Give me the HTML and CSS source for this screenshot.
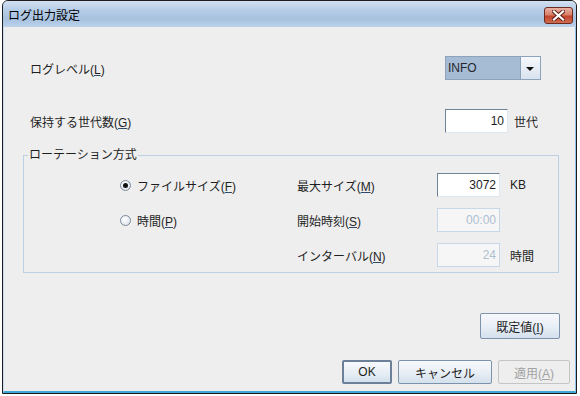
FILE: index.html
```html
<!DOCTYPE html>
<html lang="ja">
<head>
    <meta charset="UTF-8">
    <title>ログ出力設定</title>
    <link rel="stylesheet" href="styles.css">
</head>
<body>
    <div class="window">
        <div class="titlebar">
            <span class="title">ログ出力設定</span>
            <span class="close">
                <svg width="13" height="11" viewBox="0 0 13 11">
                    <path d="M2 1.5 L11 9.5 M11 1.5 L2 9.5" stroke="#5a1c12" stroke-width="4" stroke-linecap="square"/>
                    <path d="M2 1.5 L11 9.5 M11 1.5 L2 9.5" stroke="#ffffff" stroke-width="2.2" stroke-linecap="square"/>
                </svg>
            </span>
        </div>

        <div class="content">
            <div class="row">
                <span class="label">ログレベル(<u>L</u>)</span>
                <div class="combo">
                    <span class="combo-value">INFO</span>
                    <span class="combo-arrow"></span>
                </div>
            </div>

            <div class="row row-gen">
                <span class="label">保持する世代数(<u>G</u>)</span>
                <div class="ctrl">
                    <div class="field">10</div>
                    <span class="suffix">世代</span>
                </div>
            </div>

            <fieldset class="group">
                <legend>ローテーション方式</legend>
                <div class="grid">
                    <label class="radio"><span class="dot checked"></span><span>ファイルサイズ(<u>F</u>)</span></label>
                    <span class="label">最大サイズ(<u>M</u>)</span>
                    <div class="field">3072</div>
                    <span class="unit">KB</span>

                    <label class="radio"><span class="dot"></span><span>時間(<u>P</u>)</span></label>
                    <span class="label">開始時刻(<u>S</u>)</span>
                    <div class="field off">00:00</div>
                    <span class="unit"></span>

                    <span></span>
                    <span class="label">インターバル(<u>N</u>)</span>
                    <div class="field off">24</div>
                    <span class="unit">時間</span>
                </div>
            </fieldset>

            <div class="defaults">
                <button class="btn btn-defaults">既定値(<u>I</u>)</button>
            </div>

            <div class="footer">
                <button class="btn btn-ok">OK</button>
                <button class="btn btn-cancel">キャンセル</button>
                <button class="btn btn-apply" disabled>適用(<u>A</u>)</button>
            </div>
        </div>
    </div>
</body>
</html>
```

FILE: styles.css
```css
body {
    margin: 0;
    background: #ffffff;
    font-family: "Liberation Sans", "Noto Sans CJK JP", sans-serif;
    font-size: 12px;
    color: #1e1e1e;
}

.window {
    box-sizing: border-box;
    width: 575px;
    height: 394px;
    margin-left: 2px;
    border: 1px solid #1c1c1c;
    border-radius: 6px 6px 0 0;
    overflow: hidden;
    display: flex;
    flex-direction: column;
    background: #a9c3e0;
}

.titlebar {
    height: 26px;
    flex: none;
    display: flex;
    align-items: center;
    justify-content: space-between;
    padding: 0 3px 0 5px;
    background: linear-gradient(#d2e0f0 0, #b6cde7 35%, #a7c1df 70%, #bcd2eb 100%);
}

.title {
    font-size: 12px;
    color: #000;
}

.close {
    box-sizing: border-box;
    width: 29px;
    height: 17px;
    margin-top: 2px;
    display: flex;
    align-items: center;
    justify-content: center;
    border: 1px solid #6d2a20;
    border-radius: 3px;
    background: linear-gradient(#e9b2a3 0, #d8806a 45%, #c2452c 55%, #cf6a4f 100%);
}

.content {
    flex: 1;
    border-left: 1px solid #c7dcf1;
    border-right: 1px solid #8fc2e6;
    border-bottom: 2px solid #3aa9d8;
    background: #eeeeee;
    display: flex;
    flex-direction: column;
}

.row {
    display: flex;
    align-items: center;
    justify-content: space-between;
    height: 24px;
    margin-top: 29px;
    padding: 0 34px 0 26px;
}

.ctrl {
    width: 96px;
    display: flex;
    align-items: center;
    gap: 6px;
}

u {
    text-decoration-color: #2f4a6b;
}

.combo {
    box-sizing: border-box;
    width: 96px;
    height: 24px;
    display: flex;
    border: 1px solid #8da3bb;
    background: #a6bbd4;
}

.combo-value {
    flex: 1;
    padding-left: 2px;
    line-height: 22px;
    color: #25272c;
}

.combo-arrow {
    width: 19px;
    border-left: 1px solid #8da3bb;
    background: linear-gradient(#f6f8fb, #d9e3ee);
    position: relative;
}

.combo-arrow::after {
    content: "";
    position: absolute;
    left: 5px;
    top: 10px;
    border-left: 4px solid transparent;
    border-right: 4px solid transparent;
    border-top: 4px solid #111;
}

.field {
    box-sizing: border-box;
    width: 63px;
    height: 24px;
    flex: none;
    line-height: 22px;
    padding-right: 3px;
    text-align: right;
    background: #ffffff;
    border: 1px solid;
    border-color: #6f8196 #dfe7f0 #dfe7f0 #6f8196;
    color: #1e1e1e;
}

.field.off {
    background: #f6f6f6;
    border-color: #c8d7e8;
    color: #aebfd2;
}

.suffix {
    white-space: nowrap;
}

.group {
    margin: 14px 16px 0 19px;
    padding: 10px 0 5px 0;
    border: 1px solid #bccfe4;
}

.group legend {
    margin-left: 4px;
    padding: 0 1px;
    line-height: 16px;
}

.grid {
    display: grid;
    grid-template-columns: 177px 140px 63px auto;
    grid-auto-rows: 24px;
    row-gap: 11px;
    align-items: center;
    padding-left: 96px;
}

.unit {
    padding-left: 10px;
}

.radio {
    display: flex;
    align-items: center;
    gap: 6px;
}

.dot {
    box-sizing: border-box;
    width: 11px;
    height: 11px;
    border-radius: 50%;
    border: 1px solid #7c8a9a;
    background: radial-gradient(circle at 40% 35%, #ffffff, #d5dde6);
    display: flex;
    align-items: center;
    justify-content: center;
}

.dot.checked::after {
    content: "";
    width: 5px;
    height: 5px;
    border-radius: 50%;
    background: #111;
}

.defaults {
    display: flex;
    justify-content: flex-end;
    padding-right: 15px;
    margin-top: 40px;
}

.footer {
    display: flex;
    justify-content: flex-end;
    gap: 6px;
    padding-right: 5px;
    margin-top: 21px;
}

.btn {
    box-sizing: border-box;
    height: 24px;
    padding: 0;
    font: inherit;
    color: #1e1e1e;
    border: 1px solid #7d92ab;
    border-radius: 2px;
    background: linear-gradient(#f7f9fc 0, #e9eff6 50%, #d4e0ec 100%);
}

.btn-defaults {
    width: 80px;
    height: 26px;
}

.btn-ok {
    width: 50px;
    border: 2px solid #6d8099;
}

.btn-cancel {
    width: 94px;
}

.btn-apply {
    width: 72px;
    border-color: #c5c5c5;
    background: #eeeeee;
    color: #a3a3a3;
}

.btn-apply u {
    text-decoration-color: #a3a3a3;
}
```
